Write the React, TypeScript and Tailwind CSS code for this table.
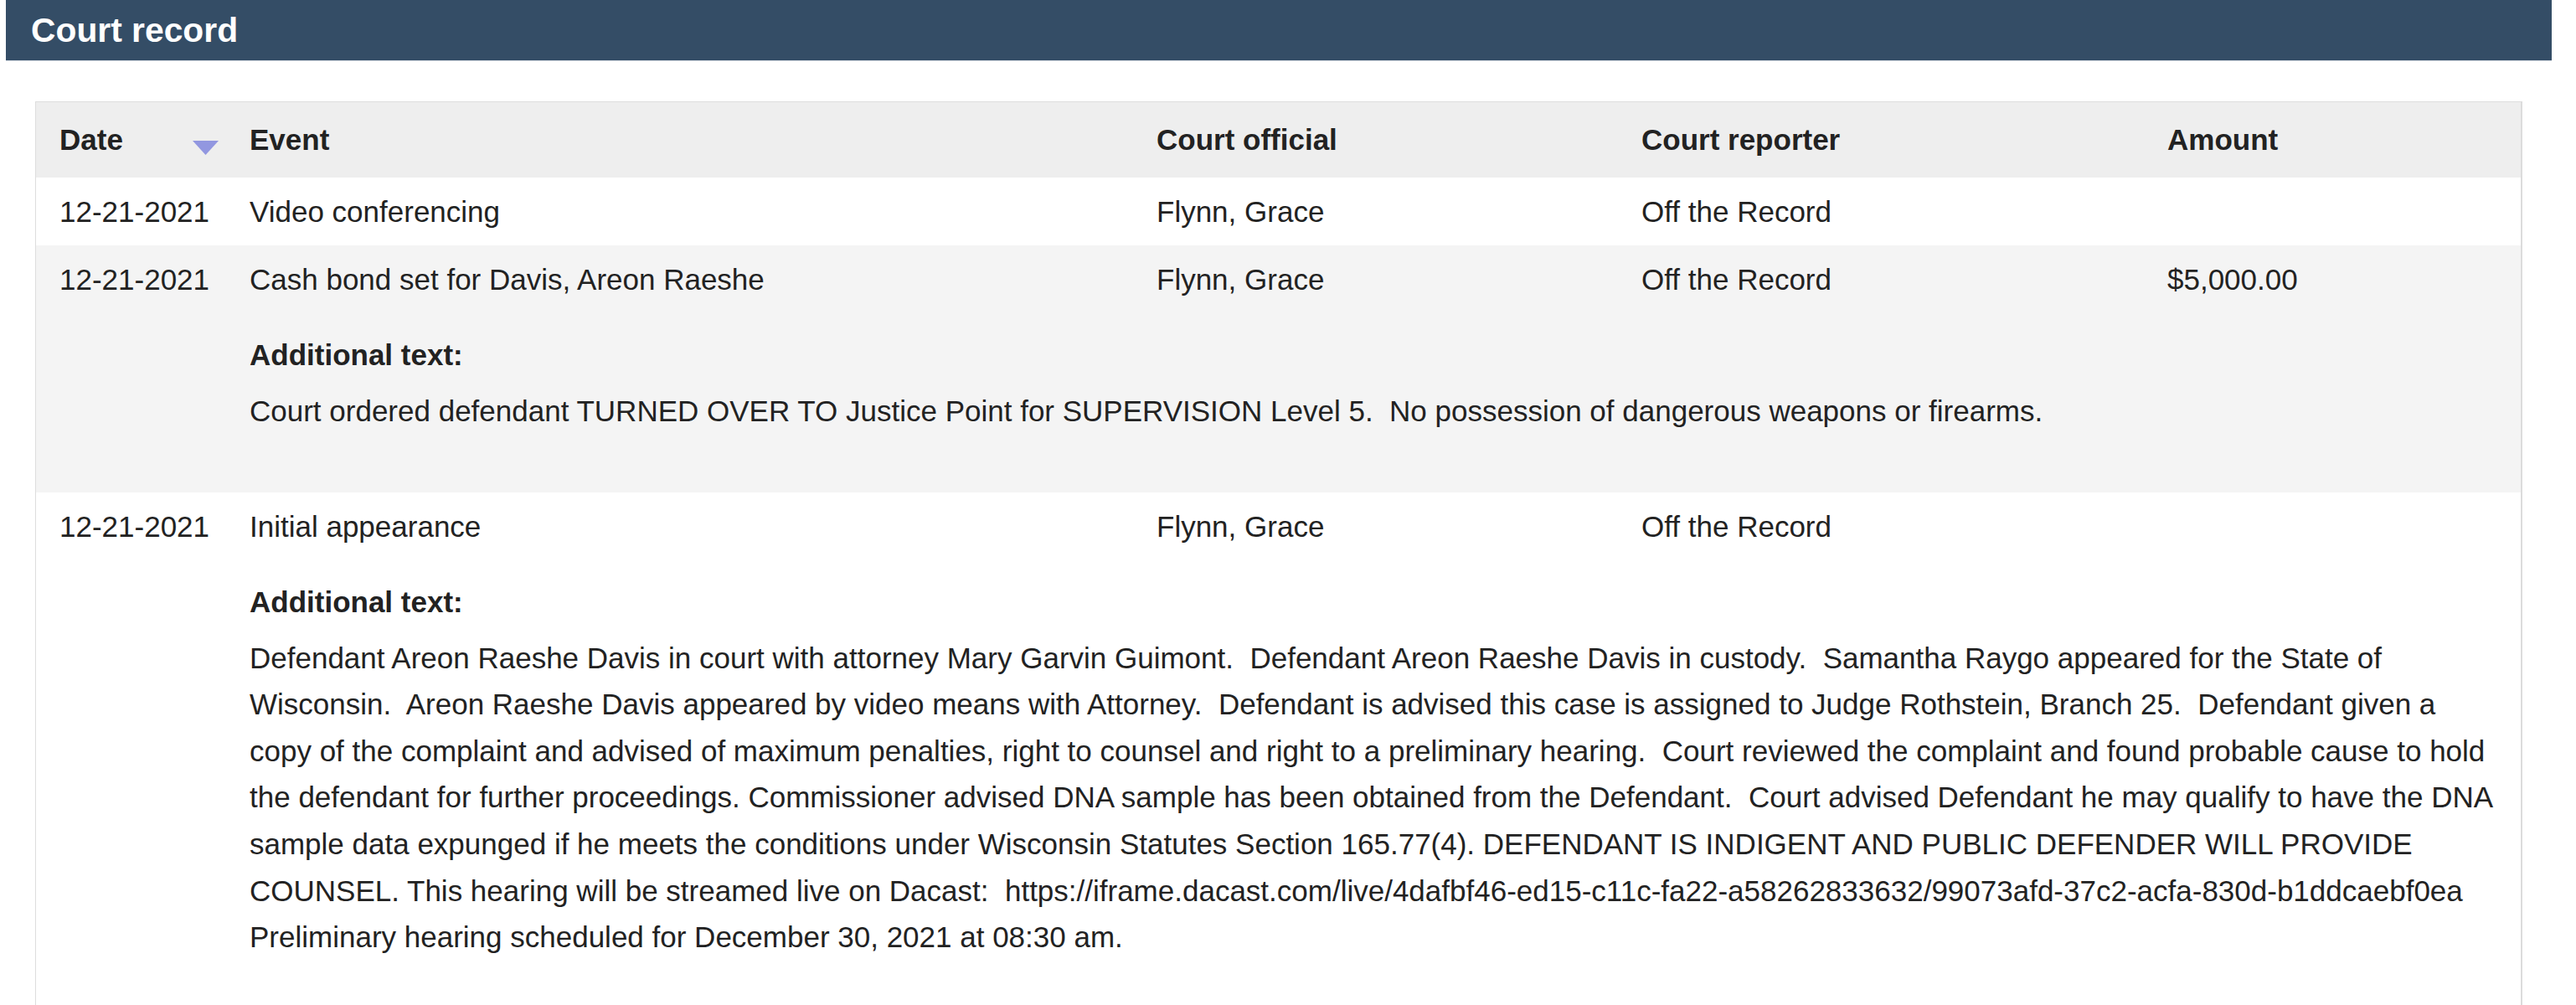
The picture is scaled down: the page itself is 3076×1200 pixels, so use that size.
import React from "react";

const rows = [
  {
    date: "12-21-2021",
    event: "Video conferencing",
    official: "Flynn, Grace",
    reporter: "Off the Record",
    amount: "",
    extra: null as string | null,
    shaded: false,
  },
  {
    date: "12-21-2021",
    event: "Cash bond set for Davis, Areon Raeshe",
    official: "Flynn, Grace",
    reporter: "Off the Record",
    amount: "$5,000.00",
    extra:
      "Court ordered defendant TURNED OVER TO Justice Point for SUPERVISION Level 5.  No possession of dangerous weapons or firearms.",
    shaded: true,
  },
  {
    date: "12-21-2021",
    event: "Initial appearance",
    official: "Flynn, Grace",
    reporter: "Off the Record",
    amount: "",
    extra:
      "Defendant Areon Raeshe Davis in court with attorney Mary Garvin Guimont.  Defendant Areon Raeshe Davis in custody.  Samantha Raygo appeared for the State of Wisconsin.  Areon Raeshe Davis appeared by video means with Attorney.  Defendant is advised this case is assigned to Judge Rothstein, Branch 25.  Defendant given a copy of the complaint and advised of maximum penalties, right to counsel and right to a preliminary hearing.  Court reviewed the complaint and found probable cause to hold the defendant for further proceedings. Commissioner advised DNA sample has been obtained from the Defendant.  Court advised Defendant he may qualify to have the DNA sample data expunged if he meets the conditions under Wisconsin Statutes Section 165.77(4). DEFENDANT IS INDIGENT AND PUBLIC DEFENDER WILL PROVIDE COUNSEL. This hearing will be streamed live on Dacast:  https://iframe.dacast.com/live/4dafbf46-ed15-c11c-fa22-a58262833632/99073afd-37c2-acfa-830d-b1ddcaebf0ea Preliminary hearing scheduled for December 30, 2021 at 08:30 am.",
    shaded: false,
  },
];

export default function App() {
  return (
    <div
      className="min-h-[1200px] w-[3076px] bg-white text-[#222222]"
      style={{ fontFamily: '"Liberation Sans", Arial, Helvetica, sans-serif' }}
    >
      <div className="ml-[7px] flex h-[73px] w-[3040px] items-center border-b border-[#d3dae1] bg-[#344d66] pl-[30px]">
        <h2 className="text-[40.8px] font-bold leading-none text-white">Court record</h2>
      </div>

      <div className="ml-[42px] mt-[48px] w-[2970px] border-t border-l border-[#dddddd] border-r-2 border-r-[#dcdcdc]">
        <table className="w-full table-fixed border-collapse text-[35px] leading-[55.6px]">
          <colgroup>
            <col className="w-[227px]" />
            <col className="w-[1083px]" />
            <col className="w-[579px]" />
            <col className="w-[628px]" />
            <col className="w-[450px]" />
          </colgroup>
          <thead>
            <tr className="h-[90px] bg-[#eeeeee] text-left">
              <th className="relative py-0 pl-[28px] pr-0 font-bold">
                Date
                <svg
                  className="absolute left-[187px] top-[46px]"
                  width="31"
                  height="17"
                  viewBox="0 0 31 17"
                >
                  <polygon points="0,0 31,0 15.5,17" fill="#9297e0" />
                </svg>
              </th>
              <th className="px-[28px] py-0 font-bold">Event</th>
              <th className="px-[28px] py-0 font-bold">Court official</th>
              <th className="px-[28px] py-0 font-bold">Court reporter</th>
              <th className="px-[28px] py-0 font-bold">Amount</th>
            </tr>
          </thead>
          <tbody>
            {rows.map((r, i) => (
              <React.Fragment key={i}>
                <tr className={r.shaded ? "bg-[#f4f4f4]" : "bg-white"}>
                  <td className="whitespace-nowrap py-[12.7px] pl-[28px] pr-0 align-top">{r.date}</td>
                  <td className="px-[28px] py-[12.7px] align-top">{r.event}</td>
                  <td className="px-[28px] py-[12.7px] align-top">{r.official}</td>
                  <td className="px-[28px] py-[12.7px] align-top">{r.reporter}</td>
                  <td className="px-[28px] py-[12.7px] align-top">{r.amount}</td>
                </tr>
                {r.extra && (
                  <tr className={r.shaded ? "bg-[#f4f4f4]" : "bg-white"}>
                    <td />
                    <td colSpan={4} className="px-[28px] pt-[22px] pb-[70px] align-top">
                      <div className="font-bold">Additional text:</div>
                      <p className="mt-[11px] whitespace-pre-wrap">{r.extra}</p>
                    </td>
                  </tr>
                )}
              </React.Fragment>
            ))}
          </tbody>
        </table>
      </div>
    </div>
  );
}
